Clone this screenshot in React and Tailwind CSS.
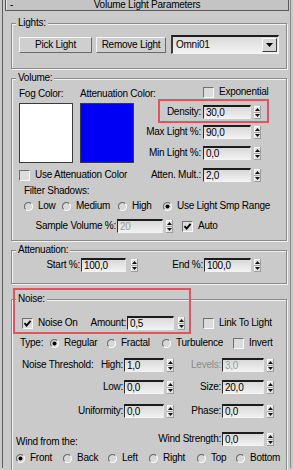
import React from "react";

const Spin = () => (
  <svg width="7" height="13" viewBox="0 0 7 13" className="block shrink-0">
    <rect x="0" y="0" width="7" height="13" fill="#e4e4e4" />
    <path d="M0 0.5 H7 M0.5 0 V13" stroke="#fbfbfb" />
    <path d="M0 12.5 H7 M6.5 0 V13" stroke="#9c9c9c" />
    <line x1="0" y1="6.5" x2="7" y2="6.5" stroke="#a8a8a8" />
    <path d="M3.5 2 L6 5 H1 Z" fill="#111" />
    <path d="M1 8 H6 L3.5 11 Z" fill="#111" />
  </svg>
);

const Box = ({ w, v, dis }) => (
  <div
    className={`${w} h-[14px] shrink-0 flex items-center pl-[2px] border-t-2 border-l border-t-[#1c1c1c] border-l-[#2c2c2c] border-b border-r border-b-[#f4f4f4] border-r-[#e8e8e8] bg-gradient-to-b from-[#d9d9d9] to-[#f1f1f1] ${
      dis ? "text-[#9c9c9c]" : "text-black"
    }`}
  >
    {v}
  </div>
);

const Check = ({ on }) => (
  <div className="w-[11px] h-[11px] shrink-0 flex items-center justify-center border-t border-l border-t-[#707070] border-l-[#707070] border-b border-r border-b-[#f8f8f8] border-r-[#f8f8f8] bg-[#dcdcdc]">
    {on && (
      <svg width="9" height="9" viewBox="0 0 9 9" className="block">
        <path d="M1.5 4.2 L3.6 6.6 L7.6 1.8" fill="none" stroke="#000" strokeWidth="1.9" />
      </svg>
    )}
  </div>
);

const Radio = ({ on }) => (
  <svg width="9" height="9" viewBox="0 0 9 9" className="block shrink-0">
    <circle cx="4.5" cy="4.5" r="3.6" fill="#d8d8d8" />
    <path d="M1.67 7.33 A4 4 0 0 1 7.33 1.67" fill="none" stroke="#6e6e6e" strokeWidth="1.2" />
    <path d="M7.33 1.67 A4 4 0 0 1 1.67 7.33" fill="none" stroke="#fafafa" strokeWidth="1.2" />
    {on && <circle cx="4.5" cy="4.5" r="2" fill="#000" />}
  </svg>
);

const RItem = ({ w, on, label }) => (
  <div className={`${w} flex items-center shrink-0`}>
    <Radio on={on} />
    <span className="ml-[5px] whitespace-nowrap">{label}</span>
  </div>
);

const Btn = ({ w, children }) => (
  <div
    className={`${w} h-[16px] shrink-0 flex items-center justify-center border border-t-[#f6f6f6] border-l-[#f6f6f6] border-b-[#6a6a6a] border-r-[#6a6a6a] bg-[#cfcfcf] whitespace-nowrap`}
  >
    {children}
  </div>
);

const Group = ({ title, className, children }) => (
  <div
    className={`relative ml-[8px] w-[276px] border border-[#8a8a8a] shadow-[inset_1px_1px_0_#f3f3f3,1px_1px_0_#f3f3f3] ${className}`}
  >
    <span className="absolute left-[4px] top-[-7px] px-[2px] leading-[12px] bg-[#cacaca] whitespace-nowrap">
      {title}
    </span>
    {children}
  </div>
);

const VField = ({ label, v, mt }) => (
  <div className={`flex items-center h-[14px] ${mt}`}>
    <div className="w-[63px] text-right pr-[2px] whitespace-nowrap">{label}</div>
    <Box w="w-[48px]" v={v} />
    <div className="ml-[3px]">
      <Spin />
    </div>
  </div>
);

const NRight = ({ label, v, dis }) => (
  <>
    <div className={`w-[48px] text-right pr-[1px] whitespace-nowrap ${dis ? "text-[#8c8c8c]" : ""}`}>
      {label}
    </div>
    <Box w="w-[42px]" v={v} dis={dis} />
    <div className="ml-[3px]">
      <Spin />
    </div>
  </>
);

const NLeftBox = ({ v }) => (
  <>
    <Box w="w-[40px]" v={v} />
    <div className="ml-[3px]">
      <Spin />
    </div>
  </>
);

export default function App() {
  return (
    <div className="relative w-[293px] h-[470px] overflow-hidden bg-[#cacaca] text-black font-['Liberation_Sans',Arial,sans-serif] text-[10px] leading-[12px] tracking-[-0.25px]">
      <div className="ml-[2px] w-[289px] h-full border-l border-r border-l-[#5e5e5e] border-r-[#8a8a8a]">
        {/* title bar */}
        <div className="mt-[-2px] ml-[2px] w-[284px] h-[13px] flex items-center border border-[#5a5a5a] bg-[#c4c4c4] shadow-[inset_1px_1px_0_#e6e6e6]">
          <span className="w-[12px] pl-[4px]">-</span>
          <span className="flex-1 text-center pr-[12px] whitespace-nowrap">Volume Light Parameters</span>
        </div>

        {/* Lights */}
        <Group title="Lights:" className="mt-[12px] pb-[14px]">
          <div className="mt-[11px] h-[19px] flex items-center pl-[7px]">
            <Btn w="w-[73px]">Pick Light</Btn>
            <div className="ml-[4px]">
              <Btn w="w-[70px]">Remove Light</Btn>
            </div>
            <div className="ml-[5px] w-[108px] h-[19px] flex items-center border-t-2 border-l-2 border-t-[#1e1e1e] border-l-[#3a3a3a] border-b border-r border-b-[#f4f4f4] border-r-[#f4f4f4] bg-gradient-to-b from-[#dadada] to-[#f2f2f2]">
              <span className="pl-[3px] flex-1">Omni01</span>
              <div className="w-[15px] h-[14px] mr-[1px] flex items-center justify-center border border-t-[#fafafa] border-l-[#fafafa] border-b-[#3c3c3c] border-r-[#3c3c3c] bg-[#d6d6d6]">
                <svg width="7" height="4" viewBox="0 0 7 4" className="block">
                  <path d="M0 0 H7 L3.5 4 Z" fill="#000" />
                </svg>
              </div>
            </div>
          </div>
        </Group>

        {/* Volume */}
        <Group title="Volume:" className="mt-[9px] pb-[7px]">
          <div className="flex h-[84px]">
            <div className="w-[128px] pl-[7px] flex">
              <div className="w-[54px] shrink-0">
                <div className="mt-[9px] h-[12px] whitespace-nowrap">Fog Color:</div>
                <div className="mt-[3px] h-[60px] w-[54px] bg-white border border-[#3a3a3a]" />
              </div>
              <div className="ml-[7px] w-[54px] shrink-0">
                <div className="mt-[9px] h-[12px] whitespace-nowrap">Attenuation Color:</div>
                <div className="mt-[3px] h-[60px] w-[54px] bg-[#0000f5] border border-[#3a3a3a]" />
              </div>
            </div>
            <div className="flex-1">
              <div className="mt-[6px] h-[14px] flex items-center pl-[63px]">
                <Check />
                <span className="ml-[5px]">Exponential</span>
              </div>
              <VField label="Density:" v="30,0" mt="mt-[6px]" />
              <VField label="Max Light %:" v="90,0" mt="mt-[6px]" />
              <VField label="Min Light %:" v="0,0" mt="mt-[7px]" />
            </div>
          </div>
          <div className="mt-[5px] h-[14px] flex items-center">
            <div className="w-[128px] pl-[7px] flex items-center">
              <Check />
              <span className="ml-[5px] whitespace-nowrap">Use Attenuation Color</span>
            </div>
            <VField label="Atten. Mult.:" v="2,0" mt="" />
          </div>
          <div className="mt-[3px] h-[12px] pl-[12px]">Filter Shadows:</div>
          <div className="mt-[3px] h-[12px] pl-[12px] flex items-center">
            <RItem w="w-[38px]" label="Low" />
            <RItem w="w-[56px]" label="Medium" />
            <RItem w="w-[45px]" label="High" />
            <RItem w="w-[110px]" on label="Use Light Smp Range" />
          </div>
          <div className="mt-[7px] h-[14px] flex items-center">
            <div className="w-[105px] text-right pr-[1px] whitespace-nowrap">Sample Volume %:</div>
            <Box w="w-[46px]" v="20" dis />
            <div className="ml-[3px]">
              <Spin />
            </div>
            <div className="ml-[9px]">
              <Check on />
            </div>
            <span className="ml-[5px]">Auto</span>
          </div>
        </Group>

        {/* Attenuation */}
        <Group title="Attenuation:" className="mt-[9px] pb-[11px]">
          <div className="mt-[7px] h-[14px] flex items-center">
            <div className="w-[69px] text-right pr-[1px] whitespace-nowrap">Start %:</div>
            <Box w="w-[45px]" v="100,0" />
            <div className="ml-[5px]">
              <Spin />
            </div>
            <div className="w-[66px] text-right pr-[1px] whitespace-nowrap">End %:</div>
            <Box w="w-[47px]" v="100,0" />
            <div className="ml-[3px]">
              <Spin />
            </div>
          </div>
        </Group>

        {/* Noise */}
        <Group title="Noise:" className="mt-[15px] pb-[20px]">
          <div className="mt-[16px] h-[14px] flex items-center">
            <div className="w-[115px] flex items-center pl-[10px]">
              <Check on />
              <span className="ml-[5px] whitespace-nowrap">Noise On</span>
              <span className="ml-auto pr-[1px]">Amount:</span>
            </div>
            <Box w="w-[47px]" v="0,5" />
            <div className="ml-[4px]">
              <Spin />
            </div>
            <div className="ml-[18px]">
              <Check />
            </div>
            <span className="ml-[5px] whitespace-nowrap">Link To Light</span>
          </div>
          <div className="mt-[7px] h-[12px] flex items-center pl-[8px]">
            <span className="w-[30px]">Type:</span>
            <RItem w="w-[57px]" on label="Regular" />
            <RItem w="w-[55px]" label="Fractal" />
            <RItem w="w-[71px]" label="Turbulence" />
            <Check />
            <span className="ml-[5px]">Invert</span>
          </div>
          <div className="mt-[9px] h-[14px] flex items-center">
            <div className="w-[112px] flex pl-[10px] whitespace-nowrap">
              <span>Noise Threshold:</span>
              <span className="ml-auto pr-[1px]">High:</span>
            </div>
            <NLeftBox v="1,0" />
            <NRight label="Levels:" v="3,0" dis />
          </div>
          <div className="mt-[8px] h-[14px] flex items-center">
            <div className="w-[112px] text-right pr-[1px]">Low:</div>
            <NLeftBox v="0,0" />
            <NRight label="Size:" v="20,0" />
          </div>
          <div className="mt-[10px] h-[14px] flex items-center">
            <div className="w-[112px] text-right pr-[1px]">Uniformity:</div>
            <NLeftBox v="0,0" />
            <NRight label="Phase:" v="0,0" />
          </div>
          <div className="mt-[14px] h-[14px] flex items-center">
            <div className="w-[143px] pl-[4px] pt-[5px] whitespace-nowrap">Wind from the:</div>
            <div className="w-[67px] text-right pr-[1px] whitespace-nowrap">Wind Strength:</div>
            <Box w="w-[42px]" v="0,0" />
            <div className="ml-[3px]">
              <Spin />
            </div>
          </div>
          <div className="mt-[6px] h-[12px] flex items-center pl-[4px]">
            <RItem w="w-[47px]" on label="Front" />
            <RItem w="w-[45px]" label="Back" />
            <RItem w="w-[41px]" label="Left" />
            <RItem w="w-[48px]" label="Right" />
            <RItem w="w-[39px]" label="Top" />
            <RItem w="w-[50px]" label="Bottom" />
          </div>
        </Group>
      </div>

      {/* annotation boxes */}
      <div className="absolute left-[158px] top-[99px] w-[111px] h-[24px] border-2 border-[#e0545e]" />
      <div className="absolute left-[13px] top-[288px] w-[178px] h-[46px] border-2 border-[#e0545e]" />
    </div>
  );
}
